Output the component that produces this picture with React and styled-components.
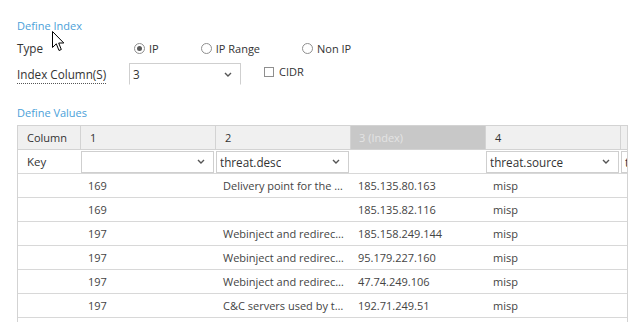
import React from "react";
import styled, { createGlobalStyle } from "styled-components";

const GlobalStyle = createGlobalStyle`
  body {
    margin: 0;
    background: #fff;
    font-family: "Open Sans", "Liberation Sans", sans-serif;
    font-size: 11px;
    color: #333;
  }
`;

const columns = ["1", "2", "3 (Index)", "4", "5"];
const keys = ["", "threat.desc", null, "threat.source", "threat.type"];

const rows = [
  ["169", "Delivery point for the Emotet malware", "185.135.80.163", "misp"],
  ["169", "", "185.135.82.116", "misp"],
  ["197", "Webinject and redirection server", "185.158.249.144", "misp"],
  ["197", "Webinject and redirection server", "95.179.227.160", "misp"],
  ["197", "Webinject and redirection server", "47.74.249.106", "misp"],
  ["197", "C&C servers used by the botnet", "192.71.249.51", "misp"],
  ["197", "", "", ""],
];

const Chevron = () => (
  <svg width="8" height="5" viewBox="0 0 8 5">
    <polyline points="1,1 4,4 7,1" fill="none" stroke="#555" strokeWidth="1.4" />
  </svg>
);

const Cursor = () => (
  <svg width="13" height="21" viewBox="0 0 13 21">
    <path
      d="M0.5 0.5 L0.5 16.5 L4.3 12.8 L7 19.5 L9.3 18.5 L6.7 12 L11.8 12 Z"
      fill="#fff"
      stroke="#000"
      strokeWidth="1"
      strokeLinejoin="miter"
    />
  </svg>
);

export default function App() {
  return (
    <>
      <GlobalStyle />
      <Page>
        <Pointer>
          <Cursor />
        </Pointer>
        <SectionTitle>Define Index</SectionTitle>
        <FormRow $top={2} $height={24}>
          <Label>Type</Label>
          <Options>
            <Option>
              <Radio $checked />
              IP
            </Option>
            <Option>
              <Radio />
              IP Range
            </Option>
            <Option>
              <Radio />
              Non IP
            </Option>
          </Options>
        </FormRow>
        <FormRow $top={3} $height={22}>
          <Label>
            <Dotted>Index Column(S)</Dotted>
          </Label>
          <Select $width={112} $open>
            <span>3</span>
            <Chevron />
          </Select>
          <CheckWrap>
            <Check />
            CIDR
          </CheckWrap>
        </FormRow>
        <SectionTitle $top={20}>Define Values</SectionTitle>
        <TableFrame>
          <Grid>
            <HeadRow>
              <HeadCell>Column</HeadCell>
              {columns.map((c, i) => (
                <HeadCell key={c} $index={i === 2}>
                  {c}
                </HeadCell>
              ))}
            </HeadRow>
            <KeyRow>
              <KeyLabel>Key</KeyLabel>
              {keys.map((k, i) =>
                k === null ? (
                  <div key={i} />
                ) : (
                  <Select key={i} $width={133}>
                    <span>{k}</span>
                    <Chevron />
                  </Select>
                )
              )}
            </KeyRow>
            {rows.map((r, i) => (
              <DataRow key={i}>
                <Cell />
                {r.map((v, j) => (
                  <Cell key={j}>{v}</Cell>
                ))}
                <Cell />
              </DataRow>
            ))}
          </Grid>
        </TableFrame>
      </Page>
    </>
  );
}

const Page = styled.div`
  position: relative;
  padding: 18px 0 0 17px;
  height: 304px;
  overflow: hidden;
`;

const Pointer = styled.div`
  position: absolute;
  left: 52px;
  top: 31px;
  z-index: 5;
  svg {
    display: block;
  }
`;

const SectionTitle = styled.div`
  margin-top: ${(p) => p.$top || 0}px;
  height: 16px;
  line-height: 16px;
  color: #4b9fd9;
  font-size: 11px;
`;

const FormRow = styled.div`
  display: flex;
  align-items: center;
  margin-top: ${(p) => p.$top}px;
  height: ${(p) => p.$height}px;
`;

const Label = styled.div`
  width: 112px;
  font-size: 11.7px;
  color: #333;
`;

const Dotted = styled.span`
  border-bottom: 1px dotted #555;
  padding-bottom: 1px;
`;

const Options = styled.div`
  display: flex;
  gap: 42px;
  margin-left: 5px;
`;

const Option = styled.label`
  display: flex;
  align-items: center;
  gap: 4px;
  color: #333;
`;

const Radio = styled.span`
  width: 11px;
  height: 11px;
  box-sizing: border-box;
  border: 1px solid #8f8f8f;
  border-radius: 50%;
  display: flex;
  align-items: center;
  justify-content: center;
  &::after {
    content: "";
    display: ${(p) => (p.$checked ? "block" : "none")};
    width: 5px;
    height: 5px;
    border-radius: 50%;
    background: #5a5a5a;
  }
`;

const Select = styled.div`
  width: ${(p) => p.$width}px;
  height: 22px;
  box-sizing: border-box;
  border: 1px solid #cfcfcf;
  border-bottom-color: ${(p) => (p.$open ? "transparent" : "#cfcfcf")};
  display: flex;
  align-items: center;
  justify-content: space-between;
  padding: 0 8px 0 3px;
  font-size: 11.7px;
  color: #333;
  background: #fff;
  svg {
    flex: none;
  }
  span {
    white-space: nowrap;
    overflow: hidden;
  }
`;

const CheckWrap = styled.label`
  display: flex;
  align-items: center;
  gap: 5px;
  margin-left: 23px;
  margin-top: -5px;
  color: #333;
`;

const Check = styled.span`
  width: 10px;
  height: 10px;
  box-sizing: border-box;
  border: 1px solid #8f8f8f;
  background: #fff;
`;

const TableFrame = styled.div`
  margin-top: 4px;
  width: 611px;
  box-sizing: border-box;
  border: 1px solid #d3d3d3;
  border-bottom: none;
  overflow: hidden;
`;

const Grid = styled.div`
  width: 738px;
`;

const rowColumns = "62px repeat(5, 135px)";

const HeadRow = styled.div`
  display: grid;
  grid-template-columns: ${rowColumns};
  height: 23px;
  background: #f0f0f0;
  border-bottom: 1px solid #d3d3d3;
`;

const HeadCell = styled.div`
  display: flex;
  align-items: center;
  padding-left: ${(p) => (p.$index ? 8 : 9)}px;
  color: ${(p) => (p.$index ? "#e4e4e4" : "#333")};
  background: ${(p) => (p.$index ? "#c8c8c8" : "transparent")};
  & + & {
    border-left: 1px solid #d3d3d3;
  }
`;

const KeyRow = styled.div`
  display: grid;
  grid-template-columns: ${rowColumns};
  height: 23px;
  align-items: center;
  column-gap: 0;
  & > div:nth-child(n + 2) {
    margin-left: 1px;
  }
`;

const KeyLabel = styled.div`
  padding-left: 9px;
  color: #333;
  font-size: 11.5px;
`;

const DataRow = styled.div`
  display: grid;
  grid-template-columns: ${rowColumns} 0;
  height: 23px;
  border-top: 1px solid #d8d8d8;
  align-items: center;
`;

const Cell = styled.div`
  padding: 0 6px 0 8px;
  color: #444;
  white-space: nowrap;
  overflow: hidden;
  text-overflow: ellipsis;
`;
